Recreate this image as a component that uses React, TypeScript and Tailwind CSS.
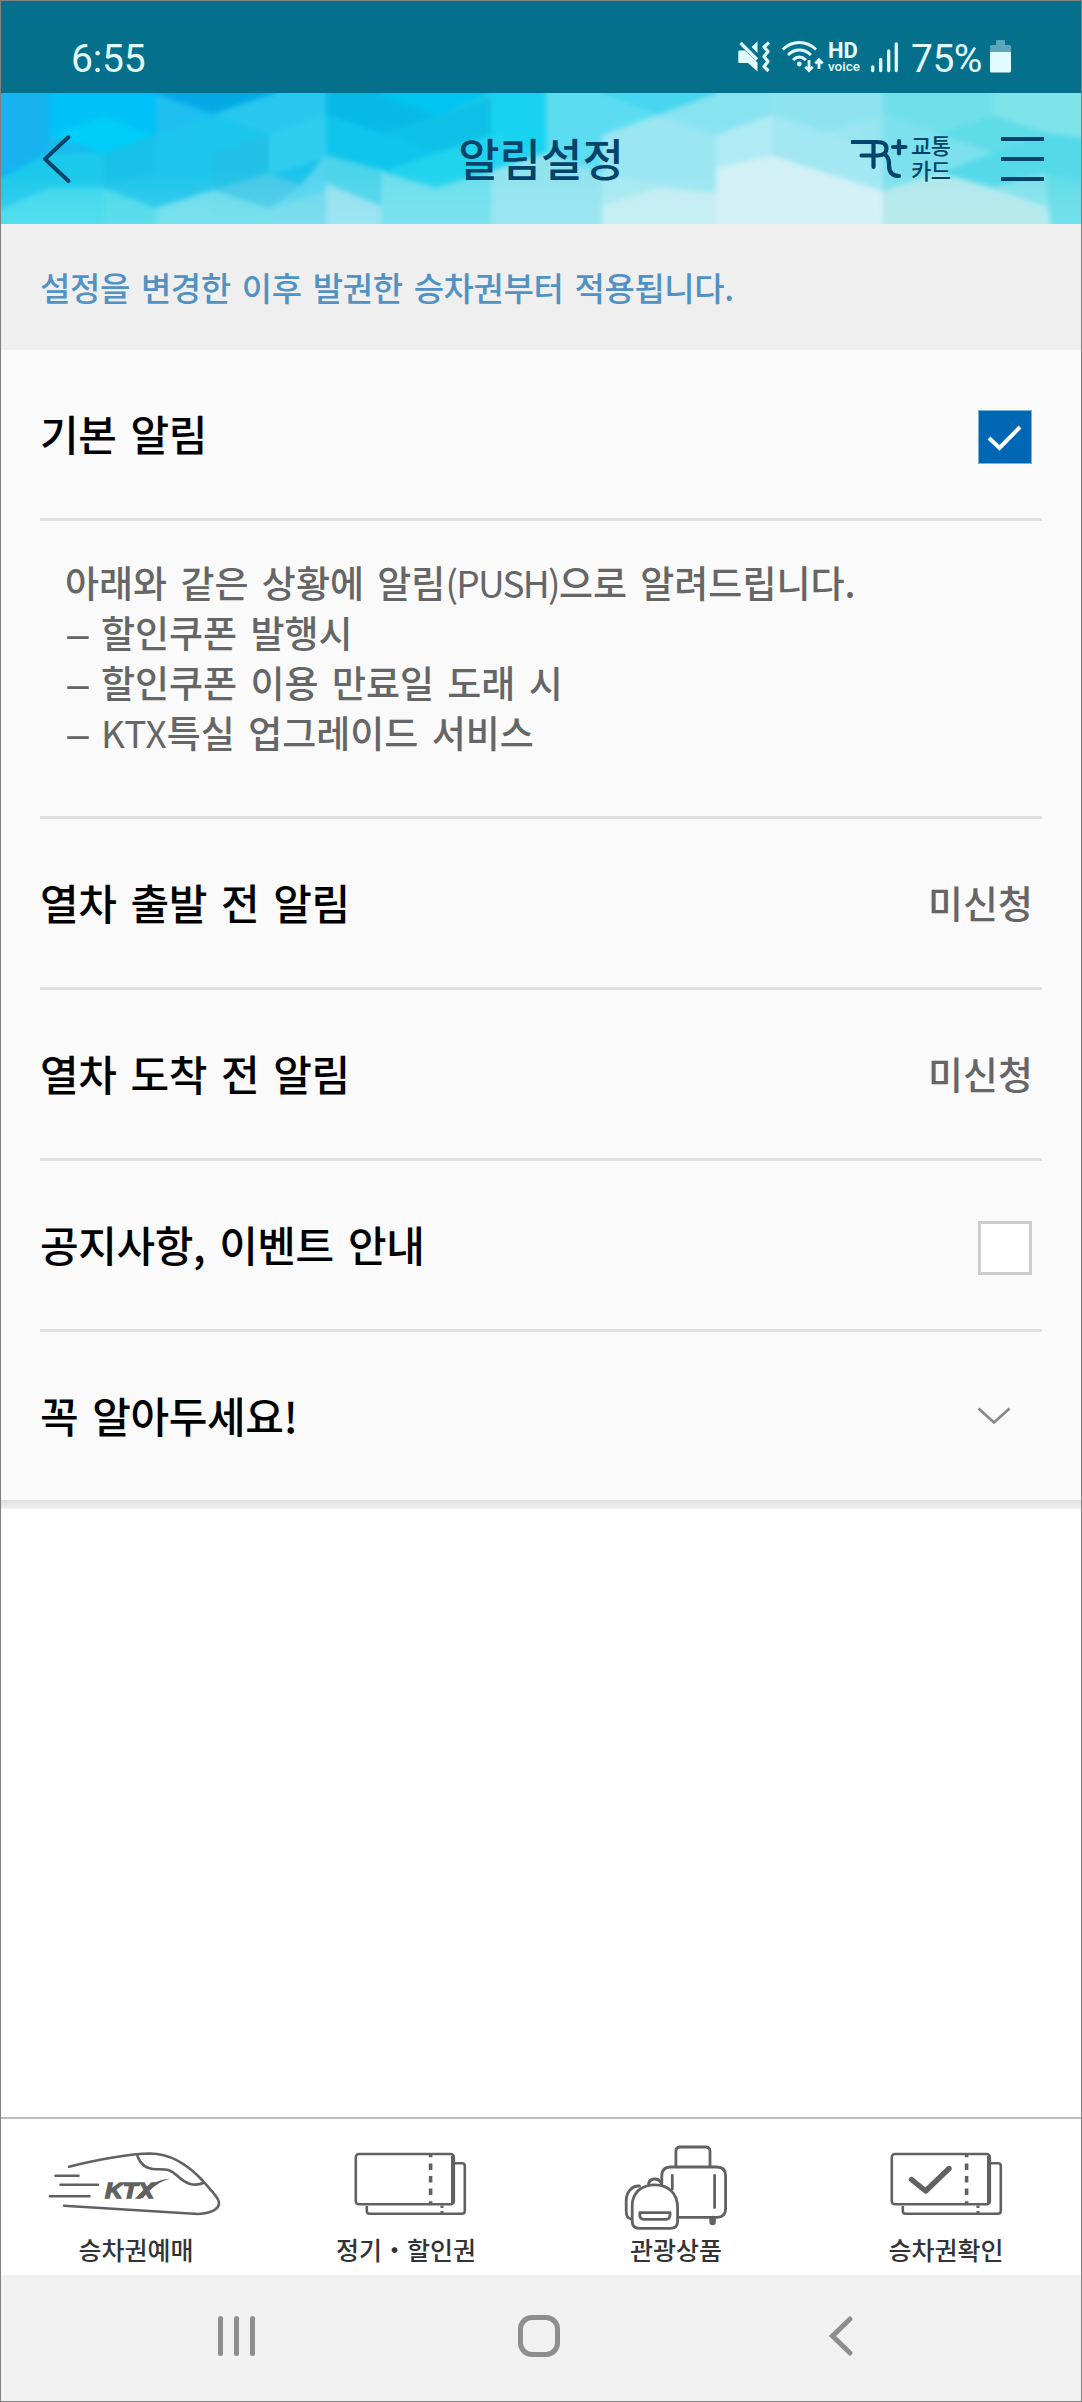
import { useState } from "react";
import type { ReactNode } from "react";

const facets = [
  { points: "-9,-9 48,-9 48,60 -9,90", fill: "#16b3f0" },
  { points: "48,-9 155,-9 155,43 103,60 48,42", fill: "#00c1f8" },
  { points: "48,42 103,23 155,43 103,60", fill: "#00cdf9" },
  { points: "153,-9 275,-9 275,0 212,21 153,0", fill: "#04a9e6" },
  { points: "155,2 212,21 155,43", fill: "#1fbff0" },
  { points: "275,-9 325,-9 325,22 268,41 212,21 275,0", fill: "#28c8ee" },
  { points: "268,41 325,22 325,65 268,82", fill: "#30ceee" },
  { points: "103,60 212,21 268,41 212,60 212,97 155,115 103,95", fill: "#1cc5eb" },
  { points: "103,60 155,43 155,80 103,95", fill: "#18c2e8" },
  { points: "212,60 268,41 268,80 212,97", fill: "#22c0e7" },
  { points: "212,97 268,80 300,92 268,115", fill: "#42c8e7" },
  { points: "300,92 325,62 325,105 268,115", fill: "#54d4ee" },
  { points: "103,95 155,115 155,140 103,140", fill: "#48d8ea" },
  { points: "-9,90 48,60 103,60 103,95 48,95 -9,120", fill: "#1bc9eb" },
  { points: "-9,120 48,95 103,95 103,140 -9,140", fill: "#3bd8eb" },
  { points: "155,115 212,97 212,140 155,140", fill: "#68dceb" },
  { points: "212,97 268,115 268,140 212,140", fill: "#66dbeb" },
  { points: "268,115 325,98 325,140 268,140", fill: "#6bd8ed" },
  { points: "325,-9 375,-9 375,0 435,23 380,40 325,22", fill: "#08b9e5" },
  { points: "375,-9 490,-9 490,0 435,23 375,0", fill: "#00c4f1" },
  { points: "435,23 490,3 490,42 435,60 380,40", fill: "#0ec0e5" },
  { points: "325,22 380,40 435,60 385,78 325,62", fill: "#10c5ec" },
  { points: "325,62 385,78 380,110 325,90", fill: "#4bd4ea" },
  { points: "385,78 435,60 490,42 545,60 490,78 435,95", fill: "#22d3ee" },
  { points: "325,90 380,112 380,140 325,140", fill: "#91e1f0" },
  { points: "380,78 435,95 490,78 490,140 380,140", fill: "#6bdeed" },
  { points: "490,-9 545,-9 545,60 490,42", fill: "#17d3f1" },
  { points: "490,78 545,60 601,80 601,140 490,140", fill: "#90e3ee" },
  { points: "545,-9 601,-9 601,0 657,22 601,42 601,80 545,60", fill: "#5bdcf1" },
  { points: "601,-9 717,-9 717,0 657,22 601,0", fill: "#47d5ef" },
  { points: "601,42 657,22 715,42 715,100 601,80", fill: "#9ae6f1" },
  { points: "601,80 715,100 657,95 601,112", fill: "#a6e8f1" },
  { points: "657,22 717,0 717,-9 771,-9 771,22 715,42", fill: "#88e3f1" },
  { points: "715,42 771,22 771,62 715,75", fill: "#b0eaf5" },
  { points: "601,112 657,95 715,100 771,80 830,110 830,140 601,140", fill: "#c2ecf3" },
  { points: "715,75 771,62 825,80 882,98 882,140 715,140", fill: "#d2f0f5" },
  { points: "771,-9 882,-9 882,22 825,40 771,22", fill: "#8de4ef" },
  { points: "771,22 825,40 882,60 882,98 771,62", fill: "#a2e7f1" },
  { points: "882,-9 992,-9 992,22 935,40 882,22", fill: "#71dfea" },
  { points: "882,22 935,40 992,60 940,80 882,98", fill: "#7ce1ec" },
  { points: "882,98 940,80 992,95 1050,115 1050,140 882,140", fill: "#b0e8ec" },
  { points: "992,-9 1090,-9 1090,45 1045,40 992,22", fill: "#7fe3ea" },
  { points: "935,40 992,22 1045,40 992,60", fill: "#60dce9" },
  { points: "992,60 1045,40 1090,50 1090,95 1045,80 992,95 940,80", fill: "#54d9e9" },
  { points: "992,95 1045,80 1050,115", fill: "#80e1ea" },
  { points: "1045,80 1090,90 1090,140 1050,140", fill: "#5fdbe9" },
];

const HeaderBackdrop = () => (
  <svg
    className="absolute inset-0 w-full h-full"
    viewBox="0 0 1080 131"
    preserveAspectRatio="none"
  >
    <defs>
      <linearGradient id="sky" x1="0" y1="0" x2="1" y2="0">
        <stop offset="0" stopColor="#18b8ee" />
        <stop offset="0.4" stopColor="#1cc9ec" />
        <stop offset="0.7" stopColor="#b4eaf4" />
        <stop offset="1" stopColor="#5fdbe9" />
      </linearGradient>
      <linearGradient id="glow" x1="0" y1="0" x2="0" y2="1">
        <stop offset="0.6" stopColor="#fff" stopOpacity="0" />
        <stop offset="1" stopColor="#d9fbf6" stopOpacity="0.15" />
      </linearGradient>
      <filter id="soft" x="-5%" y="-20%" width="110%" height="140%" colorInterpolationFilters="sRGB">
        <feGaussianBlur stdDeviation="2.5" />
      </filter>
    </defs>
    <rect width="1080" height="131" fill="url(#sky)" />
    <g filter="url(#soft)">
      {facets.map((facet, i) => (
        <polygon key={i} points={facet.points} fill={facet.fill} />
      ))}
    </g>
    <rect width="1080" height="131" fill="url(#glow)" />
  </svg>
);

const StatusBar = () => (
  <div className="h-[92px] bg-[#04708b] text-[#e2fbff] flex justify-between items-start pt-[37px] pl-[70px] pr-[70px] font-['Roboto',sans-serif]">
    <span className="pt-px text-[39px] leading-[40px] tracking-[-0.2px]">6:55</span>
    <div className="flex items-start">
      <svg width="36" height="36" viewBox="0 0 36 36" fill="currentColor">
        <path d="M3.5 12.5H9L21.5 24.5V33.5L12 25H3.5Q2.3 25 2.3 23.8V13.7Q2.3 12.5 3.5 12.5Z" />
        <path d="M21.5 3.2V15L15.5 9Z" />
        <path
          d="M4.5 5L21 21.5M33 4.5L28 9L32 13.5L28 18.5L32 23.5L28 28.5L32.5 33"
          fill="none"
          stroke="currentColor"
          strokeWidth="3.2"
          strokeLinejoin="round"
        />
      </svg>
      <svg
        width="46"
        height="36"
        viewBox="0 0 46 36"
        fill="none"
        stroke="currentColor"
        className="ml-2"
      >
        <path
          d="M2.8 11.5Q10 4.5 19.3 4.5T36 11.5M8 17Q13 12 19.3 12T31 17M13 22Q16 19 19.3 19T26 22"
          strokeWidth="3"
        />
        <circle cx="19.3" cy="26" r="2.4" fill="currentColor" stroke="none" />
        <path
          d="M29 22V32M25.3 28.8L29 32.5L32.7 28.8M39 31V22.5M35.3 25.5L39 21.8L42.7 25.5"
          strokeWidth="2.8"
        />
      </svg>
      <div className="ml-[2px] w-[36px] h-[36px] flex flex-col pt-[4px]">
        <span className="text-[22px] leading-[18px] font-bold">HD</span>
        <span className="text-[13.5px] leading-[13px] font-medium">voice</span>
      </div>
      <svg
        width="30"
        height="36"
        viewBox="0 0 30 36"
        stroke="currentColor"
        strokeWidth="3.3"
        strokeLinecap="round"
        className="ml-[6px]"
      >
        <path d="M2.7 29V32.5M10.7 21.5V32.5M18.7 13V32.5M26.3 6V32.5" />
      </svg>
      <span className="pt-px ml-[11px] w-[73px] text-[39px] leading-[40px] tracking-[-0.5px]">
        75%
      </span>
      <svg
        width="21"
        height="36"
        viewBox="0 0 21 36"
        fill="currentColor"
        className="ml-[6px]"
      >
        <path d="M6 7V3Q6 2 7 2H14Q15 2 15 3V7H19.5Q21 7 21 8.5V14H0V8.5Q0 7 1.5 7Z" opacity="0.4" />
        <path d="M0 14H21V33Q21 34.6 19.4 34.6H1.6Q0 34.6 0 33Z" />
      </svg>
    </div>
  </div>
);

const Header = () => (
  <header className="relative h-[131px] text-[#04436a]">
    <HeaderBackdrop />
    <div className="relative h-full grid grid-cols-3 items-center">
      <button className="ml-[39px] justify-self-start">
        <svg
          width="34"
          height="52"
          viewBox="0 0 34 52"
          fill="none"
          stroke="currentColor"
          strokeWidth="4"
          strokeLinecap="round"
          strokeLinejoin="round"
        >
          <path d="M28.5 4L5 26L28.5 48" />
        </svg>
      </button>
      <h1 className="text-center text-[45px] font-medium whitespace-nowrap pb-[2px]">
        알림설정
      </h1>
      <div className="flex items-center justify-end pr-[37px]">
        <svg
          width="58"
          height="46"
          viewBox="0 0 58 46"
          fill="none"
          stroke="currentColor"
          strokeWidth="4.2"
          strokeLinecap="round"
        >
          <path d="M1.5 6H26Q35.5 6 35.5 12.5T27 19.5H10.5M22.5 6V31M33 18Q38.5 21 38 29Q38 40 48 40M42 11H54.5M48 5V17.5" />
        </svg>
        <div className="ml-[2px] w-[42px] flex flex-col pb-[3px] text-[22px] leading-[25px] tracking-[-0.5px] font-medium whitespace-nowrap">
          <span>교통</span>
          <span>카드</span>
        </div>
        <button className="ml-[48px] w-[43px] flex flex-col gap-4">
          <span className="h-1 bg-current" />
          <span className="h-1 bg-current" />
          <span className="h-1 bg-current" />
        </button>
      </div>
    </div>
  </header>
);

type CheckboxProps = { checked: boolean; onChange: () => void };

const Checkbox = ({ checked, onChange }: CheckboxProps) => (
  <button
    role="checkbox"
    aria-checked={checked}
    onClick={onChange}
    className={
      checked
        ? "mt-[6px] mr-[10px] size-[54px] bg-[#0067b4] border border-[#78b3dc]"
        : "mt-[6px] mr-[10px] size-[54px] bg-white border-[3px] border-[#cccccc]"
    }
  >
    {checked && (
      <svg
        width="52"
        height="52"
        viewBox="0 0 52 52"
        fill="none"
        stroke="#fff"
        strokeWidth="4"
      >
        <path d="M10 27L20.5 37L41 16" />
      </svg>
    )}
  </button>
);

type RowProps = { title: string; last?: boolean; children: ReactNode };

const Row = ({ title, last, children }: RowProps) => (
  <div
    className={
      last
        ? "h-[168px] flex items-center justify-between"
        : "h-[171px] flex items-center justify-between border-b-[3px] border-[#e0e0e0]"
    }
  >
    <span className="pb-[3px] text-[42px] font-medium text-black tracking-[-0.4px] [word-spacing:5px]">
      {title}
    </span>
    {children}
  </div>
);

const Value = ({ children }: { children: ReactNode }) => (
  <span className="mr-[9px] pb-[3px] text-[38px] font-medium text-[#666]">{children}</span>
);

const DashLine = ({ children }: { children: ReactNode }) => (
  <p className="flex">
    <span className="w-[36px]">
      <span className="inline-block origin-left scale-x-[1.3]">–</span>
    </span>
    <span>{children}</span>
  </p>
);

const TrainIcon = () => (
  <svg
    width="180"
    height="92"
    viewBox="0 0 180 92"
    fill="none"
    stroke="#616161"
    strokeWidth="2.6"
    strokeLinecap="round"
  >
    <path d="M23 26.7C50 20 82 14 104 13.5C126 13.5 145 28 157 41C163 48 170 55 172 59.5C176 67 168 73 152 74L18 65.7" />
    <path d="M91.5 16C94 23 100 29 110 29.3C122 29 125 30 131 35.5C140 44 148 47 158 42.7" />
    <path d="M9.5 35.7H32.5M14.5 44.7H52M4 56.3H43.5" />
    <text
      x="59"
      y="57.5"
      textLength="49"
      lengthAdjust="spacingAndGlyphs"
      fontFamily="Liberation Sans, sans-serif"
      fontSize="22"
      fontWeight="700"
      fontStyle="italic"
      fill="#616161"
      strokeWidth="1.4"
    >
      KTX
    </text>
    <path d="M91 58C99 46 110 40 124 38.5C113 42 105 48 97 58Z" fill="#616161" stroke="none" />
  </svg>
);

const TicketShape = () => (
  <>
    <path d="M22.8 66V71Q22.8 73.7 25.5 73.7H118Q120.8 73.7 120.8 71V26Q120.8 23.3 118 23.3H111" />
    <rect x="11.8" y="14" width="98" height="50.3" rx="3" />
    <path d="M109 16V63" strokeWidth="4" />
    <path d="M86.6 14V64" strokeWidth="3.6" strokeDasharray="6.5 6.1" strokeDashoffset="3.2" />
    <path d="M98 65.5V68M98 71V74" strokeWidth="3" />
  </>
);

const TicketIcon = () => (
  <svg width="124" height="92" viewBox="0 0 124 92" fill="none" stroke="#616161" strokeWidth="2.6">
    <TicketShape />
  </svg>
);

const TicketCheckIcon = () => (
  <svg width="124" height="92" viewBox="4 0 124 92" fill="none" stroke="#616161" strokeWidth="2.6">
    <TicketShape />
    <path
      d="M31.5 39.5L45.7 51L69 28.5"
      strokeWidth="5.4"
      strokeLinecap="round"
      strokeLinejoin="round"
    />
  </svg>
);

const LuggageIcon = () => (
  <svg
    width="110"
    height="92"
    viewBox="0 0 110 92"
    fill="none"
    stroke="#616161"
    strokeWidth="2.8"
    strokeLinecap="round"
  >
    <path d="M54.9 26V11.5Q54.9 7 59.4 7H84.5Q89 7 89 11.5V26" />
    <path d="M40.8 44V36Q40.8 27 49.5 27H96Q104.6 27 104.6 36V68.5Q104.6 77.3 96 77.3H58" />
    <path d="M51.3 35.5V49M93.6 35.5V67.5" />
    <path d="M91.6 79V82" strokeWidth="6.5" />
    <path d="M11.2 81V66C11.2 52 21 44.8 34 44.8S56.6 53 56.6 68V81Q56.6 88.3 49.5 88.3H18.5Q11.2 88.3 11.2 81Z" />
    <path d="M27.5 43.5Q29 39 33.8 39T40.3 43.5M18.5 46C10 45.5 5.2 53 5.2 61V71.5Q5.2 78 10 79" />
    <path d="M18.8 72.7H49V75Q49 79.3 45 79.3H23Q18.8 79.3 18.8 75Z" strokeLinejoin="round" />
  </svg>
);

const tabs = [
  { label: "승차권예매", icon: <TrainIcon /> },
  { label: "정기・할인권", icon: <TicketIcon /> },
  { label: "관광상품", icon: <LuggageIcon /> },
  { label: "승차권확인", icon: <TicketCheckIcon /> },
];

const TabBar = () => (
  <nav className="h-[158px] bg-white border-t-2 border-[#bbbbbb] grid grid-cols-4">
    {tabs.map((tab) => (
      <button key={tab.label} className="flex flex-col items-center pt-[21px]">
        {tab.icon}
        <span className="-mt-px text-[25px] leading-[36px] text-[#333] font-medium whitespace-nowrap">
          {tab.label}
        </span>
      </button>
    ))}
  </nav>
);

const SystemNav = () => (
  <div className="h-[126px] bg-[#f1f1f1] flex items-center pl-[217px] pb-1">
    <div className="flex gap-[11px]">
      <span className="w-[5px] h-[40px] rounded-full bg-[#8e8e8e]" />
      <span className="w-[5px] h-[40px] rounded-full bg-[#8e8e8e]" />
      <span className="w-[5px] h-[40px] rounded-full bg-[#8e8e8e]" />
    </div>
    <span className="ml-[263px] size-[42px] rounded-[14px] border-[5px] border-[#8e8e8e]" />
    <svg
      width="26"
      height="42"
      viewBox="0 0 26 42"
      fill="none"
      stroke="#8e8e8e"
      strokeWidth="5"
      strokeLinecap="round"
      className="ml-[268px]"
    >
      <path d="M22 4L4.5 21L22 38" />
    </svg>
  </div>
);

export default function App() {
  const [basic, setBasic] = useState(true);
  const [event, setEvent] = useState(false);

  return (
    <div className="w-[1082px] h-[2402px] border border-[#808080] bg-white flex flex-col overflow-hidden font-['Noto_Sans_CJK_KR',sans-serif]">
      <StatusBar />
      <Header />

      <div className="h-[126px] bg-[#efefef] flex items-center pl-[39px] pt-[2px]">
        <p className="text-[33px] text-[#5192c2] font-medium tracking-[-0.4px] [word-spacing:4px] whitespace-nowrap">
          설정을 변경한 이후 발권한 승차권부터 적용됩니다.
        </p>
      </div>

      <main className="bg-[#fafafa] px-[39px]">
        <Row title="기본 알림">
          <Checkbox checked={basic} onChange={() => setBasic(!basic)} />
        </Row>
        <div className="h-[298px] pt-[36px] pl-[25px] border-b-[3px] border-[#e0e0e0] text-[37px] leading-[50px] text-[#666] font-medium [word-spacing:5px] whitespace-nowrap">
          <p>
            아래와 같은 상황에 알림
            <span className="font-normal tracking-[-1.7px]">(PUSH)</span>
            으로 알려드립니다.
          </p>
          <DashLine>할인쿠폰 발행시</DashLine>
          <DashLine>할인쿠폰 이용 만료일 도래 시</DashLine>
          <DashLine>
            <span className="font-normal">KTX</span>특실 업그레이드 서비스
          </DashLine>
        </div>
        <Row title="열차 출발 전 알림">
          <Value>미신청</Value>
        </Row>
        <Row title="열차 도착 전 알림">
          <Value>미신청</Value>
        </Row>
        <Row title="공지사항, 이벤트 안내">
          <Checkbox checked={event} onChange={() => setEvent(!event)} />
        </Row>
        <Row title="꼭 알아두세요!" last>
          <svg
            width="34"
            height="20"
            viewBox="0 0 34 20"
            fill="none"
            stroke="#888"
            strokeWidth="2.6"
            className="mr-[31px]"
          >
            <path d="M1.5 2.5L17 16.5L32.5 2.5" />
          </svg>
        </Row>
      </main>
      <div className="h-[9px] bg-linear-to-b from-[#dedede] to-[#f2f2f2]" />

      <div className="flex-1" />
      <TabBar />
      <SystemNav />
    </div>
  );
}
